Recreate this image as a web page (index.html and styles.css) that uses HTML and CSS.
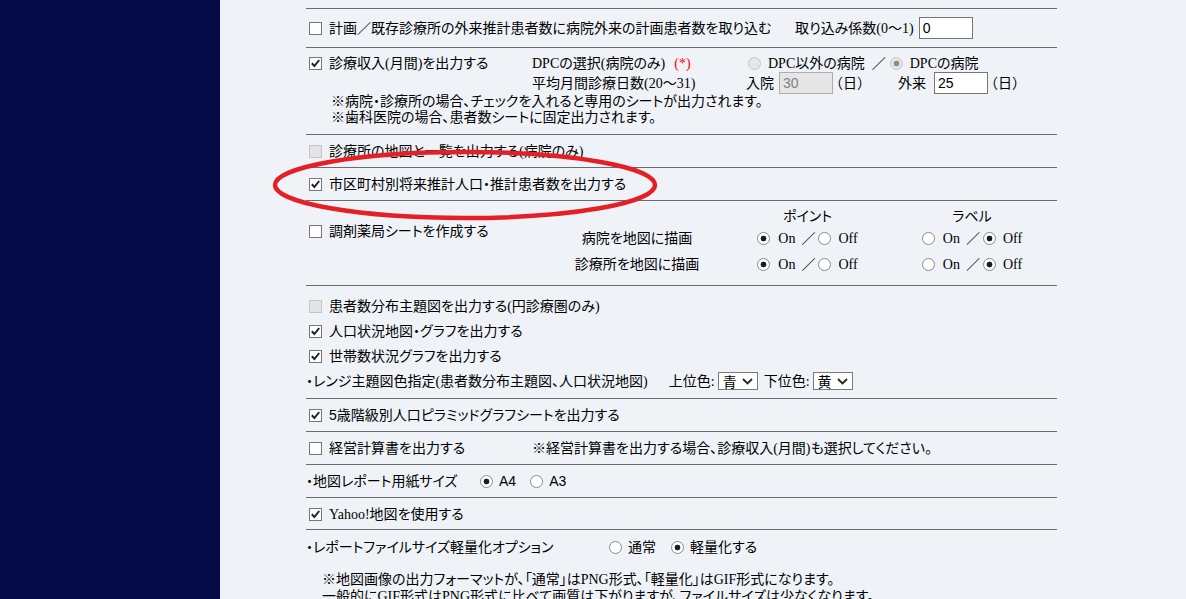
FILE: index.html
```html
<!DOCTYPE html>
<html lang="ja">
<head>
    <meta charset="UTF-8">
    <title>出力オプション</title>
    <link rel="stylesheet" href="styles.css">
</head>
<body>
<div class="page">
    <aside class="sidebar"></aside>
    <main class="content">
        <div class="options">

            <div class="row row-input">
                <label class="check opt-plan"><input type="checkbox">計画／既存診療所の外来推計患者数に病院外来の計画患者数を取り込む</label>
                <span>取り込み係数(0～1)</span>
                <input type="text" class="num" value="0">
            </div>

            <div class="row row-dpc">
                <div class="dpc-grid">
                    <label class="check"><input type="checkbox" checked>診療収入(月間)を出力する</label>
                    <span>DPCの選択(病院のみ)<span class="req">(*)</span></span>
                    <span class="choice">
                        <input type="radio" name="dpc" disabled><span class="lbl">DPC以外の病院</span>
                        <span class="slash">／</span>
                        <input type="radio" name="dpc" checked disabled><span class="lbl">DPCの病院</span>
                    </span>
                    <span></span>
                    <span>平均月間診療日数(20～31)</span>
                    <span class="days">
                        入院<input type="text" class="num" value="30" disabled><span class="unit">（日）</span>
                        <span class="out">外来</span><input type="text" class="num wide" value="25"><span class="unit">（日）</span>
                    </span>
                </div>
                <p class="notes">※病院・診療所の場合、チェックを入れると専用のシートが出力されます。<br>※歯科医院の場合、患者数シートに固定出力されます。</p>
            </div>

            <div class="row">
                <label class="check"><input type="checkbox" disabled>診療所の地図と一覧を出力する(病院のみ)</label>
            </div>

            <div class="row">
                <label class="check"><input type="checkbox" checked>市区町村別将来推計人口・推計患者数を出力する</label>
            </div>

            <div class="row row-pharm">
                <label class="check pharm"><input type="checkbox">調剤薬局シートを作成する</label>
                <div class="map-table">
                    <span></span>
                    <span>ポイント</span>
                    <span>ラベル</span>

                    <span>病院を地図に描画</span>
                    <span class="onoff">
                        <input type="radio" name="hp" checked><span class="on">On</span><span class="slash">／</span><input type="radio" name="hp"><span class="off">Off</span>
                    </span>
                    <span class="onoff">
                        <input type="radio" name="hl"><span class="on">On</span><span class="slash">／</span><input type="radio" name="hl" checked><span class="off">Off</span>
                    </span>

                    <span>診療所を地図に描画</span>
                    <span class="onoff">
                        <input type="radio" name="cp" checked><span class="on">On</span><span class="slash">／</span><input type="radio" name="cp"><span class="off">Off</span>
                    </span>
                    <span class="onoff">
                        <input type="radio" name="cl"><span class="on">On</span><span class="slash">／</span><input type="radio" name="cl" checked><span class="off">Off</span>
                    </span>
                </div>
            </div>

            <div class="row row-maps">
                <div class="line"><label class="check"><input type="checkbox" disabled>患者数分布主題図を出力する(円診療圏のみ)</label></div>
                <div class="line"><label class="check"><input type="checkbox" checked>人口状況地図・グラフを出力する</label></div>
                <div class="line"><label class="check"><input type="checkbox" checked>世帯数状況グラフを出力する</label></div>
                <div class="line range">
                    <span>・レンジ主題図色指定(患者数分布主題図、人口状況地図)</span>
                    <span class="color-lbl">上位色:</span>
                    <select><option>青</option><option>赤</option><option>黄</option></select>
                    <span class="color-lbl next">下位色:</span>
                    <select><option>黄</option><option>青</option><option>赤</option></select>
                </div>
            </div>

            <div class="row">
                <label class="check"><input type="checkbox" checked><span class="sans">5</span>歳階級別人口ピラミッドグラフシートを出力する</label>
            </div>

            <div class="row">
                <label class="check opt-left"><input type="checkbox">経営計算書を出力する</label>
                <span>※経営計算書を出力する場合、診療収入(月間)も選択してください。</span>
            </div>

            <div class="row">
                <span class="paper-lbl">・地図レポート用紙サイズ</span>
                <input type="radio" name="paper" checked><span class="sans paper">A4</span>
                <input type="radio" name="paper"><span class="sans paper">A3</span>
            </div>

            <div class="row row-tight">
                <label class="check"><input type="checkbox" checked>Yahoo!地図を使用する</label>
            </div>

            <div class="row row-size">
                <div class="size-line">
                    <span class="size-lbl">・レポートファイルサイズ軽量化オプション</span>
                    <input type="radio" name="size"><span class="size-opt">通常</span>
                    <input type="radio" name="size" checked><span class="size-opt">軽量化する</span>
                </div>
                <p class="notes small">※地図画像の出力フォーマットが、「通常」はPNG形式、「軽量化」はGIF形式になります。<br>一般的にGIF形式はPNG形式に比べて画質は下がりますが、ファイルサイズは少なくなります。</p>
            </div>

        </div>
    </main>
</div>

<svg class="mark" width="1186" height="599" viewBox="0 0 1186 599">
    <ellipse cx="465" cy="185" rx="190" ry="33" fill="none" stroke="#e51f26" stroke-width="4.5"/>
</svg>
</body>
</html>
```

FILE: styles.css
```css
body {
    margin: 0;
    font-family: "Liberation Serif", "Noto Sans CJK JP", serif;
    font-size: 14px;
    font-feature-settings: "palt";
    color: #000;
    background-color: #eff3f8;
}
.page {
    display: flex;
    min-height: 100vh;
}
.sidebar {
    width: 220px;
    flex: none;
    background-color: #070a48;
}
.content {
    flex: 1;
    padding: 8px 0 0 86px;
}
.options {
    width: 751px;
}
.row {
    display: flex;
    align-items: center;
    border-top: 1px solid #6b6b6b;
    padding: 8px 0 7px;
    line-height: 17px;
    white-space: nowrap;
}
.row-tight {
    padding-bottom: 6px;
}
.sans {
    font-family: "Liberation Sans", "Noto Sans CJK JP", sans-serif;
}

/* checkbox / radio */
.check {
    display: inline-flex;
    align-items: center;
}
input[type="checkbox"] {
    appearance: none;
    flex: none;
    box-sizing: border-box;
    width: 13px;
    height: 13px;
    margin: 0 7px 0 3px;
    border: 1px solid #767676;
    background: #fff no-repeat center;
}
input[type="checkbox"]:checked {
    background-image: url("data:image/svg+xml,%3Csvg xmlns='http://www.w3.org/2000/svg' width='11' height='11' viewBox='0 0 11 11'%3E%3Cpath d='M1.8 5.2l2.6 2.8L9.2 2' fill='none' stroke='%23222' stroke-width='2'/%3E%3C/svg%3E");
}
input[type="checkbox"]:disabled {
    background-color: #e4e4e4;
    border-color: #c4c4c4;
}
input[type="radio"] {
    appearance: none;
    flex: none;
    box-sizing: border-box;
    width: 13px;
    height: 13px;
    margin: 0;
    border: 1px solid #8a8a8a;
    border-radius: 50%;
    background: #fff;
}
input[type="radio"]:checked {
    background: radial-gradient(circle, #1c1c1c 0 2.6px, #fff 3.2px);
}
input[type="radio"]:disabled {
    border-color: #c6c6c6;
    background: #e6e6e6;
}
input[type="radio"]:checked:disabled {
    background: radial-gradient(circle, #8c8c8c 0 2.6px, #e6e6e6 3.2px);
}
input.num {
    box-sizing: border-box;
    width: 54px;
    height: 22px;
    margin: 0 0 0 5px;
    padding: 0 3px;
    border: 1px solid #767676;
    background: #fff;
    font: 14px "Liberation Sans", sans-serif;
    color: #000;
}
input.num.wide {
    margin-left: 8px;
}
input.num:disabled {
    background: #e6e6e6;
    border-color: #adadad;
    color: #808080;
}
select {
    appearance: none;
    box-sizing: border-box;
    width: 40px;
    height: 18px;
    margin: 0;
    padding: 0 0 0 4px;
    border: 1px solid #7a7a7a;
    border-radius: 0;
    font-family: "Noto Sans CJK JP", sans-serif;
    font-size: 14px;
    line-height: 16px;
    color: #000;
    background: #fff url("data:image/svg+xml,%3Csvg xmlns='http://www.w3.org/2000/svg' width='11' height='7' viewBox='0 0 11 7'%3E%3Cpath d='M1 1l4.5 4.5L10 1' fill='none' stroke='%23222' stroke-width='1.8'/%3E%3C/svg%3E") no-repeat right 4px center;
}

/* row 1 */
.row-input {
    padding: 8px 0;
}
.opt-plan {
    width: 489px;
}

/* row 2 */
.row-dpc {
    display: block;
    padding: 6px 0 8px;
}
.dpc-grid {
    display: grid;
    grid-template-columns: 226px 214px 1fr;
    grid-template-rows: 18px 22px;
    align-items: center;
}
.req {
    color: #f00;
    margin-left: 9px;
}
.choice,
.days {
    display: flex;
    align-items: center;
}
.choice input {
    margin-left: 2px;
}
.choice .lbl {
    margin-left: 7px;
}
.choice .slash {
    margin: 0 2px 0 7px;
}
.days .unit {
    margin-left: -4px;
    font-feature-settings: normal;
}
.days .out {
    margin-left: 27px;
}
.notes {
    margin: 0;
    padding-left: 25px;
    line-height: 16px;
}

/* row 5 */
.row-pharm {
    align-items: flex-start;
    padding: 6px 0 8px;
}
.pharm {
    width: 250px;
    margin-top: 16px;
}
.map-table {
    display: grid;
    grid-template-columns: 162px 179px 150px;
    grid-template-rows: 18px 26px 26px;
    align-items: center;
    justify-items: center;
}
.onoff {
    display: flex;
    align-items: center;
}
.onoff .on {
    margin: 0 6px 0 8px;
}
.onoff .slash {
    margin-right: 3px;
}
.onoff .off {
    margin-left: 7px;
}

/* row 6 */
.row-maps {
    display: block;
    padding: 8px 0 5px;
}
.line {
    display: flex;
    align-items: center;
    height: 25px;
}
.line.range {
    height: 24px;
}
.color-lbl {
    margin: 0 3px 0 21px;
}
.color-lbl.next {
    margin-left: 6px;
}

/* rows 8, 9 */
.opt-left {
    width: 226px;
}
.paper-lbl {
    width: 174px;
}
.paper {
    margin: 0 14px 0 6px;
}

/* row 11 */
.row-size {
    display: block;
    padding: 9px 0 0;
}
.size-line {
    display: flex;
    align-items: center;
}
.size-lbl {
    width: 303px;
}
.size-opt {
    margin: 0 15px 0 6px;
}
.notes.small {
    margin-top: 15px;
    padding-left: 16px;
    line-height: 17px;
}

.mark {
    position: absolute;
    top: 0;
    left: 0;
    pointer-events: none;
}
```
